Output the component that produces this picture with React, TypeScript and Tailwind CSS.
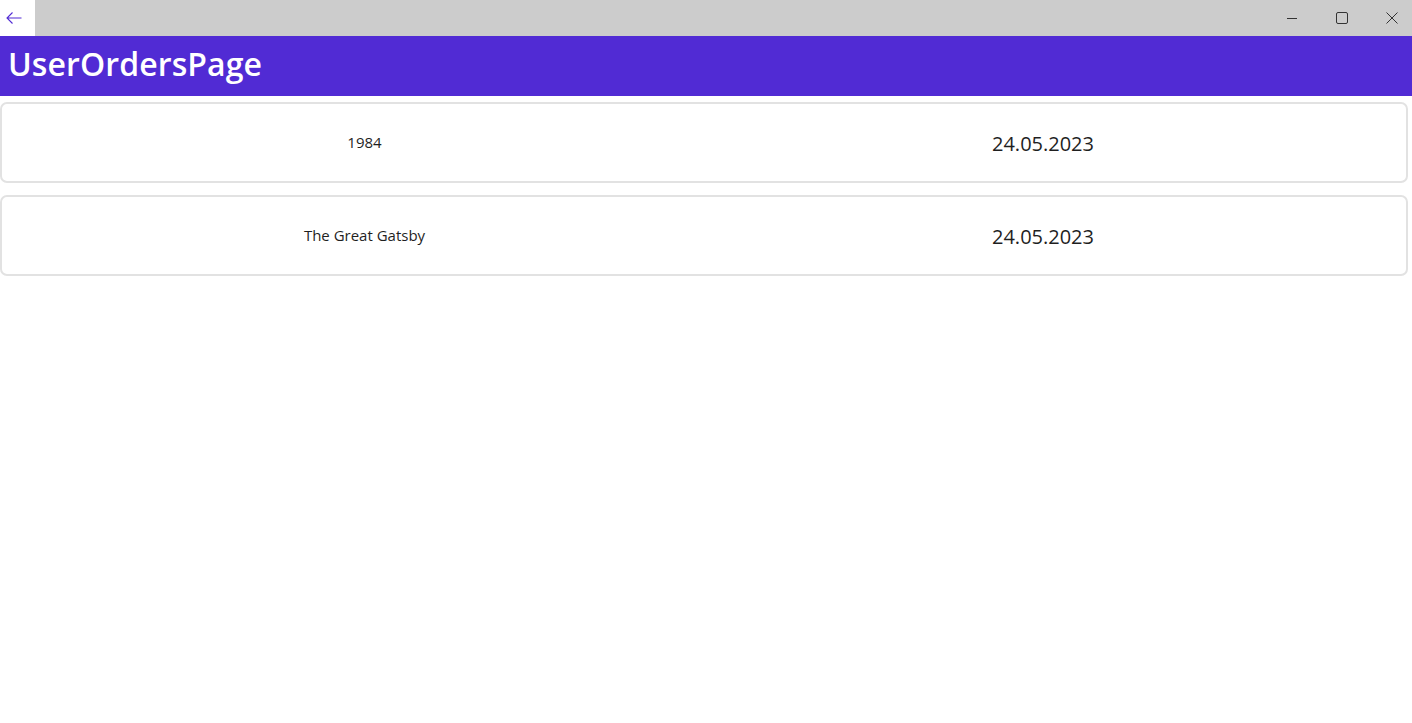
import React from "react";

const orders = [
  { title: "1984", date: "24.05.2023" },
  { title: "The Great Gatsby", date: "24.05.2023" },
];

const TitleBar = () => (
  <div className="flex h-[36px] bg-[#cccccc] items-stretch overflow-hidden">
    <button className="w-[35px] bg-white flex items-center pl-[6px]">
      <svg width="16" height="12" viewBox="0 0 16 12" fill="none" stroke="#512bd4" strokeWidth="1.1">
        <path d="M15.5 6H1M6.5 0.5L1 6l5.5 5.5" />
      </svg>
    </button>
    <div className="flex-1" />
    <div className="flex mr-[-5px]">
      <div className="w-[50px] flex items-center justify-center">
        <svg width="12" height="12" viewBox="0 0 12 12" stroke="#333" strokeWidth="1">
          <path d="M1 6.5h10" />
        </svg>
      </div>
      <div className="w-[50px] flex items-center justify-center">
        <svg width="12" height="12" viewBox="0 0 12 12" fill="none" stroke="#333" strokeWidth="1">
          <rect x="0.5" y="0.5" width="11" height="11" rx="1.5" />
        </svg>
      </div>
      <div className="w-[50px] flex items-center justify-center">
        <svg width="12" height="12" viewBox="0 0 12 12" stroke="#333" strokeWidth="1">
          <path d="M0.5 0.5l11 11M11.5 0.5l-11 11" />
        </svg>
      </div>
    </div>
  </div>
);

export default function App() {
  return (
    <div className="w-[1412px] h-[723px] bg-white font-['Open_Sans',sans-serif] text-[#1f1f1f]">
      <TitleBar />
      <div className="h-[60px] bg-[#512bd4] flex items-center px-[8px]">
        <h1 className="text-white text-[32px] font-semibold tracking-[0.1px] leading-none pb-[4px]">
          UserOrdersPage
        </h1>
      </div>
      <div className="flex flex-col gap-[12px] pt-[6px] w-[1408px]">
        {orders.map((o) => (
          <div
            key={o.title}
            className="h-[81px] border-2 border-[#e2e2e2] rounded-[7px] flex items-center"
          >
            <div className="w-[725px] text-center text-[15px] pb-[1px]">{o.title}</div>
            <div className="w-[632px] text-center text-[20px] pt-[2px]">{o.date}</div>
          </div>
        ))}
      </div>
    </div>
  );
}
